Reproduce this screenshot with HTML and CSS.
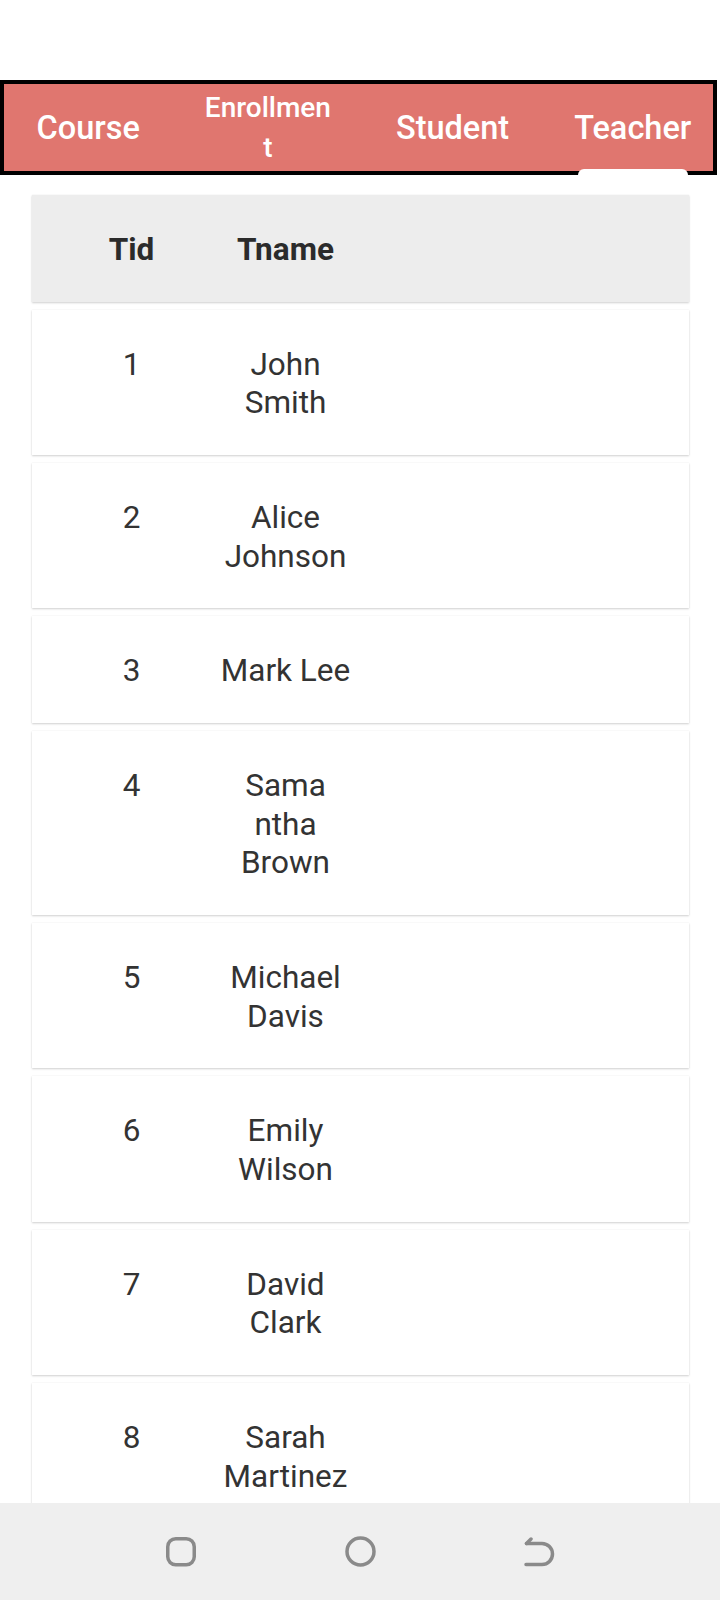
FILE: index.html
```html
<!DOCTYPE html>
<html>
<head>
<meta charset="utf-8">
<link rel="stylesheet" href="styles.css">
</head>
<body>
<div class="statusbar"></div>
<nav class="tabbar">
  <div class="tab">Course</div>
  <div class="tab tab-small">Enrollmen<br>t</div>
  <div class="tab">Student</div>
  <div class="tab tab-active">Teacher<span class="indicator"></span></div>
</nav>
<main class="list">
  <div class="card head">
    <div class="cell">Tid</div>
    <div class="cell">Tname</div>
  </div>
  <div class="card">
    <div class="cell">1</div>
    <div class="cell">John<br>Smith</div>
  </div>
  <div class="card">
    <div class="cell">2</div>
    <div class="cell">Alice<br>Johnson</div>
  </div>
  <div class="card">
    <div class="cell">3</div>
    <div class="cell">Mark Lee</div>
  </div>
  <div class="card">
    <div class="cell">4</div>
    <div class="cell">Sama<br>ntha<br>Brown</div>
  </div>
  <div class="card">
    <div class="cell">5</div>
    <div class="cell">Michael<br>Davis</div>
  </div>
  <div class="card">
    <div class="cell">6</div>
    <div class="cell">Emily<br>Wilson</div>
  </div>
  <div class="card">
    <div class="cell">7</div>
    <div class="cell">David<br>Clark</div>
  </div>
  <div class="card">
    <div class="cell">8</div>
    <div class="cell">Sarah<br>Martinez</div>
  </div>
</main>
<footer class="navbar">
  <div class="navslot">
    <svg width="30" height="30" viewBox="0 0 30 30"><rect x="1.75" y="1.75" width="26.5" height="26" rx="8" ry="8" fill="none" stroke="#8a8a8a" stroke-width="3.5"/></svg>
  </div>
  <div class="navslot">
    <svg width="31" height="31" viewBox="0 0 31 31"><circle cx="15.5" cy="15.5" r="13.5" fill="none" stroke="#8a8a8a" stroke-width="3.5"/></svg>
  </div>
  <div class="navslot">
    <svg width="32" height="30" viewBox="0 0 32 30"><path d="M3.5 6.5 H19 A10.5 10.5 0 0 1 19 27.5 H3" fill="none" stroke="#8a8a8a" stroke-width="3.5" stroke-linecap="round" stroke-linejoin="round"/><path d="M3.5 6.5 L8 2" fill="none" stroke="#8a8a8a" stroke-width="3.5" stroke-linecap="round"/></svg>
  </div>
</footer>
</body>
</html>
```
FILE: styles.css
```css
html, body {
  margin: 0;
  padding: 0;
}
body {
  width: 720px;
  height: 1600px;
  overflow: hidden;
  display: flex;
  flex-direction: column;
  background: #ffffff;
  font-family: Roboto, "Noto Sans", "Liberation Sans", sans-serif;
  color: #333333;
}
.statusbar {
  height: 80px;
  flex: none;
}
.tabbar {
  flex: none;
  box-sizing: border-box;
  height: 95px;
  width: 717px;
  border: 4px solid #000000;
  background: #e0766f;
  display: flex;
  align-items: stretch;
}
.tab {
  flex: none;
  position: relative;
  display: flex;
  align-items: center;
  justify-content: center;
  text-align: center;
  padding: 0 32.5px;
  color: #ffffff;
  font-weight: 500;
  font-size: 32.5px;
  line-height: 38px;
  white-space: nowrap;
}
.tab-small {
  font-size: 28px;
  line-height: 40px;
  padding-top: 1px;
}
.indicator {
  position: absolute;
  left: 50%;
  bottom: -4px;
  width: 110px;
  height: 6px;
  margin-left: -55px;
  background: #ffffff;
  border-radius: 6px 6px 0 0;
}
.list {
  flex: 1;
  min-height: 0;
  overflow: hidden;
  display: flex;
  flex-direction: column;
  gap: 8px;
  padding: 20px 31px 0 32px;
}
.card {
  flex: none;
  display: grid;
  grid-template-columns: 154px 154px;
  padding: 36px 0 32px 22.5px;
  background: #ffffff;
  box-shadow: 0 1px 2px rgba(0, 0, 0, 0.18), 0 0 1px rgba(0, 0, 0, 0.08);
  font-size: 31.5px;
  line-height: 38.65px;
}
.card.head {
  background: #ededed;
  font-weight: 700;
  color: #2b2b2b;
}
.cell {
  text-align: center;
  padding: 0 8px;
}
.navbar {
  flex: none;
  height: 97px;
  background: #efefef;
  display: grid;
  grid-template-columns: repeat(3, 179px);
  justify-content: center;
  align-items: center;
}
.navslot {
  display: flex;
  justify-content: center;
  align-items: center;
}
.navslot svg {
  display: block;
}
```
